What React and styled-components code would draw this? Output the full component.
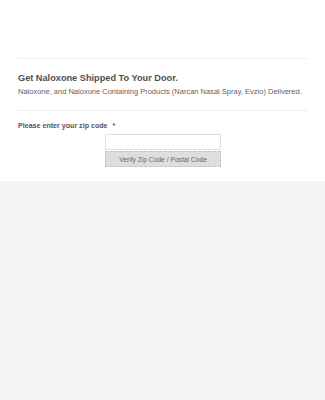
import styled, { createGlobalStyle } from "styled-components";

const GlobalStyle = createGlobalStyle`
  html, body {
    margin: 0;
    padding: 0;
    background: #f4f4f4;
    font-family: "Liberation Sans", Arial, sans-serif;
  }
`;

const FormCard = styled.div`
  background: #fff;
  padding: 58px 18px 14px 18px;
`;

const Header = styled.div`
  border-top: 1px solid #eeeeee;
  border-bottom: 1px solid #eeeeee;
  padding: 13px 0 13px 0;
`;

const Title = styled.h1`
  margin: 0;
  font-size: 9.2px;
  font-weight: bold;
  color: #4f4f4f;
  line-height: 12px;
`;

const Subtitle = styled.p`
  margin: 3px 0 0 0;
  font-size: 7.5px;
  color: #5f5f5f;
  line-height: 10px;
  white-space: nowrap;
`;

const Field = styled.div`
  padding: 11px 0 0 0;
`;

const Label = styled.label`
  display: block;
  font-size: 7.1px;
  font-weight: bold;
  color: #555;
  line-height: 9px;
`;

const Star = styled.span`
  margin-left: 5px;
  color: #555;
`;

const Controls = styled.div`
  display: flex;
  flex-direction: column;
  width: 116px;
  margin: 3px 0 0 87px;
  gap: 1px;
`;

const Input = styled.input`
  box-sizing: border-box;
  height: 16px;
  border: 1px solid #dedede;
  border-radius: 2px;
  background: #fff;
  margin: 0;
`;

const Button = styled.button`
  box-sizing: border-box;
  height: 16px;
  border: 1px dashed #c4c4c4;
  background: #dedede;
  color: #666;
  font-family: "Liberation Sans", Arial, sans-serif;
  font-size: 6.7px;
  padding: 0;
`;

export default function App() {
  return (
    <>
      <GlobalStyle />
      <FormCard>
        <Header>
          <Title>Get Naloxone Shipped To Your Door.</Title>
          <Subtitle>
            Naloxone, and Naloxone Containing Products (Narcan Nasal Spray, Evzio) Delivered.
          </Subtitle>
        </Header>
        <Field>
          <Label>
            Please enter your zip code<Star>*</Star>
          </Label>
          <Controls>
            <Input type="text" />
            <Button>Verify Zip Code / Postal Code</Button>
          </Controls>
        </Field>
      </FormCard>
    </>
  );
}
